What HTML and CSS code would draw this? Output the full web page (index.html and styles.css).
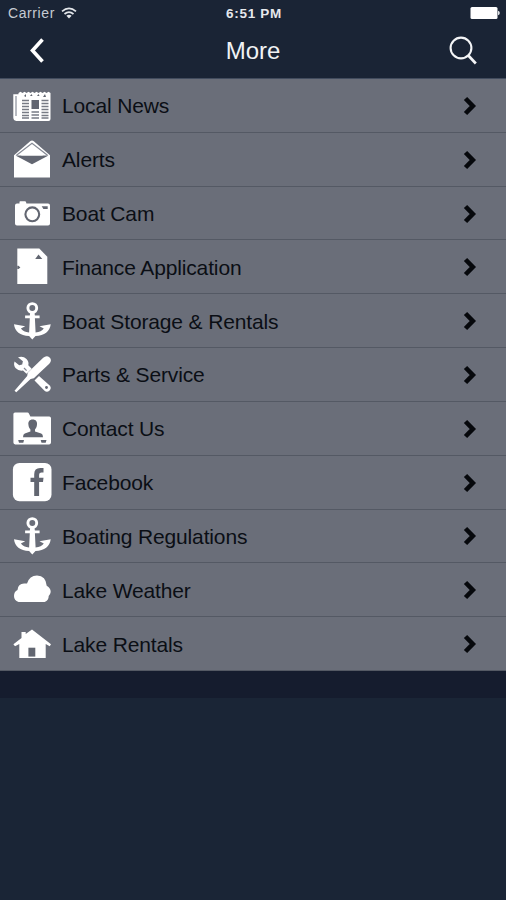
FILE: index.html
```html
<!DOCTYPE html>
<html lang="en">
<head>
<meta charset="utf-8">
<title>More</title>
<link rel="stylesheet" href="styles.css">
</head>
<body>
<svg class="defs" aria-hidden="true">
  <symbol id="chevron" viewBox="0 0 14 20"><path d="M2.500 2.500 9.800 10 2.500 17.500" fill="none" stroke="#06080c" stroke-width="4.600"/></symbol>
  <symbol id="anchor" viewBox="0 0 40 40">
    <circle cx="20.3" cy="7" r="4.400" fill="none" stroke="#fff" stroke-width="2.900"/>
    <path d="M18.300 11h4l.6 3.400h4.700v2.900h-4.700l.7 14.100c4-.5 6.600-1.800 8.200-4l-4.300-2.200L38.700 23.300c-.8 7.300-6.200 11.300-15.200 11.800L20.300 38.400l-3.200-3.300C8.100 34.600 2.700 30.600 2 23.300l11.200 1.900-4.300 2.200c1.600 2.200 4.200 3.500 8.200 4l.7-14.100h-4.700v-2.900h4.700z"/>
  </symbol>
</svg>
<header class="header">
  <div class="status">
    <div class="carrier"><span>Carrier</span>
      <svg class="wifi" viewBox="0 0 16 12"><path d="M1 4.300Q8-1.700 15 4.300M3.500 7Q8 3.200 12.500 7" fill="none" stroke="#e3e6ea" stroke-width="1.7"/><path d="M5.400 8.700Q8 6.800 10.600 8.700L8 11.500z" fill="#e3e6ea"/></svg>
    </div>
    <div class="time">6:51 PM</div>
    <div class="power"><svg class="battery" viewBox="0 0 32 14"><rect x="2.500" y="1" width="27" height="12" rx="1.500" fill="#fff"/><path d="M30 4.800q1.800.5 1.800 2.200T30 9.200z" fill="#dfe2e6"/></svg></div>
  </div>
  <nav class="navbar">
    <svg class="back" viewBox="0 0 18 28"><path d="M14.500 2.500 4.500 13.500 14.500 24.500" fill="none" stroke="#fff" stroke-width="3.600"/></svg>
    <h1 class="title">More</h1>
    <svg class="search" viewBox="0 0 30 30"><circle cx="13" cy="12" r="10.400" fill="none" stroke="#f4f5f7" stroke-width="2.100"/><path d="m20.300 19.500 7.500 8" fill="none" stroke="#f4f5f7" stroke-width="2.700"/></svg>
  </nav>
</header>
<ul class="list">
  <li class="row"><svg class="icon" viewBox="0 0 40 40">
    <path d="M6.500 8 8.500 6.700l2 1.300 2-1.300 2 1.300 2-1.300 2 1.300 2-1.300 2 1.300 2-1.300 2 1.300 2-1.300 2 1.300 2-1.300 2 1.300 2-1.300 2 1.300V34q0 2-2 2H4.300q-3-.5-3-3.500V9.200H6.500z"/>
    <path class="dim" d="M3 11h2v20H3z"/>
    <path class="cut" d="M19.500 15h7.500v9h-7.500zM12 11l2-2v3zM18 11l1.500-2 1 2zM25 11l1.500-2 1 2zM31 12l2-3 1 3z"/>
    <path class="lines" d="M10 15.500h7M10 18.500h7M10 21.500h7M10 24.500h7M10 27.500h7M10 30.500h7M10 33h7M19.500 27h7.500M19.500 30h7.500M19.500 33h7.500M29.500 15.500h7M29.500 18.500h7M29.500 21.500h7M29.500 24.500h7M29.500 27.500h7M29.500 30.500h7M29.500 33h7"/>
  </svg><span class="label">Local News</span><svg class="chevron"><use href="#chevron"/></svg></li>
  <li class="row"><svg class="icon" viewBox="0 0 40 40">
    <path d="M2 16.200 18.500 2q1.500-1 3 0L38 16.200V38.500H2z"/>
    <path class="thin" d="M4.500 16.200 20 4.300l15.500 11.900"/>
    <path class="cut" d="M3.500 16.500h33L20 25.300z"/>
    <path d="M9 16.500 20 6.300l11 10.200z"/>
  </svg><span class="label">Alerts</span><svg class="chevron"><use href="#chevron"/></svg></li>
  <li class="row"><svg class="icon" viewBox="0 0 40 40">
    <path d="M5 10.600h2.500V9q0-.8.800-.8H13q.8 0 1 .8l.4 1.600H36q2 0 2 2v17.900q0 2-2 2H5q-2 0-2-2V12.600q0-2 2-2z"/>
    <circle class="ring" cx="20.300" cy="21.300" r="6.900"/><path class="cut" d="M29.700 13.300h6v2.600h-4.300z"/>
  </svg><span class="label">Boat Cam</span><svg class="chevron"><use href="#chevron"/></svg></li>
  <li class="row"><svg class="icon" viewBox="0 0 40 40">
    <path d="M5.300 1.400h22l8 8.400v27.300h-30z"/><path class="cut" d="m26.500 7.400 3.800 4.700H23.200zM5.300 18.700h1.200l1.900 1.700-1.900 1.700H5.300z"/>
  </svg><span class="label">Finance Application</span><svg class="chevron"><use href="#chevron"/></svg></li>
  <li class="row"><svg class="icon"><use href="#anchor"/></svg><span class="label">Boat Storage &amp; Rentals</span><svg class="chevron"><use href="#chevron"/></svg></li>
  <li class="row"><svg class="icon" viewBox="0 0 40 40">
    <path d="M6 3.200q5-1.700 8.500 1.700 2.700 2.800 1.800 6.300l3.400 3.500-5.200 5-3.500-3.200q-4.500.7-7.200-2.300Q1.300 11.800 2.500 7.500l4.700 3.800 3-.8.700-3.300z"/>
    <path d="m22.500 26.500 4.500-4.600 10.700 9.700q2.200 2.600-.2 5-2.600 2.400-5.200 0z"/>
    <path d="M31.200 3.700q3.500-3 6.400-.2 2.800 2.700-.3 6.200L21.800 24.300l-3.200.7L4.300 38.300 2.500 36.700 15.200 22l.5-3.300z"/>
    <circle class="cut" cx="34.500" cy="33.500" r="1.400"/>
    <path class="thin" d="m12 14 2.600 2.700"/>
  </svg><span class="label">Parts &amp; Service</span><svg class="chevron"><use href="#chevron"/></svg></li>
  <li class="row"><svg class="icon" viewBox="0 0 40 40">
    <path d="M1.400 6q0-1.600 1.600-1.600h12.500q1 0 1.400 1l1.500 3H37.200q1.800 0 1.800 1.800v24.400q0 1.800-1.800 1.800H3.200q-1.800 0-1.800-1.800z"/>
    <path class="cut" d="M20.700 11.500c3.300 0 4.600 2.200 4.300 5-.2 2.400-1 4-2 4.900v2l6.200 2.200q1.800.8 1.800 3.600H11q0-2.800 1.800-3.600l5.600-2.200v-2c-1-.9-1.800-2.500-2-4.900-.3-2.800 1-5 4.300-5zM6.200 32H12l-.7 2.800H7zM28.700 32h5.800l-.8 2.800h-4.200z"/>
  </svg><span class="label">Contact Us</span><svg class="chevron"><use href="#chevron"/></svg></li>
  <li class="row"><svg class="icon" viewBox="0 0 40 40">
    <rect x=".9" y=".9" width="38.600" height="38.300" rx="6.500"/>
    <path class="cut" d="M22.200 33.900V20h-3.700v-4.300h3.700v-3.500q0-6.300 6-6.300h3.300v4.600h-2q-2.400 0-2.400 2.300v2.900h4.400L31 20h-3.900v13.900z"/>
  </svg><span class="label">Facebook</span><svg class="chevron"><use href="#chevron"/></svg></li>
  <li class="row"><svg class="icon"><use href="#anchor"/></svg><span class="label">Boating Regulations</span><svg class="chevron"><use href="#chevron"/></svg></li>
  <li class="row"><svg class="icon" viewBox="0 0 40 40">
    <path d="M6.500 31.900Q2 30.500 2 26q0-4.500 3.500-6Q6 13 13 13.500h2Q17.500 5.500 25 5.500q9 .5 9.700 10.300 4 2.200 4 6.200-.4 2.500-2 4 0 4.500-4 5.900z"/>
  </svg><span class="label">Lake Weather</span><svg class="chevron"><use href="#chevron"/></svg></li>
  <li class="row"><svg class="icon" viewBox="0 0 40 40">
    <path d="M9.500 8h4.200v2.100L20 5.500 39 20.300l-1.300 2-4-2.200V34H7.300V20.100l-4.300 2.200-1.600-2L9.500 14z"/>
    <path class="cut" d="M16.400 23.700h6.900v8.900h-6.900z"/>
  </svg><span class="label">Lake Rentals</span><svg class="chevron"><use href="#chevron"/></svg></li>
</ul>
<div class="band"></div>
</body>
</html>
```
FILE: styles.css
```css
* { box-sizing: border-box; }
body {
  margin: 0;
  height: 900px;
  overflow: hidden;
  background: #1a2536;
  font-family: "Liberation Sans", Arial, sans-serif;
}
.defs { display: none; }
.header {
  height: 79px;
  background: #1a2435;
  border-bottom: 1px solid #424c5e;
}
.status {
  display: grid;
  grid-template-columns: 1fr auto 1fr;
  align-items: center;
  height: 26px;
  padding: 0 6px 0 8px;
}
.carrier { display: flex; align-items: center; gap: 6px; color: #c6cbd2; font-size: 14px; letter-spacing: .6px; }
.wifi { width: 16px; height: 12px; }
.time { color: #e6e8ec; font-size: 13.500px; font-weight: bold; letter-spacing: .7px; }
.power { display: flex; justify-content: flex-end; }
.battery { width: 32px; height: 14px; }
.navbar {
  display: grid;
  grid-template-columns: 1fr auto 1fr;
  align-items: center;
  height: 50px;
  padding: 0 28px;
}
.back { width: 18px; height: 28px; }
.title { margin: 0; color: #f0f2f4; font-size: 24px; font-weight: normal; line-height: 28px; }
.search { width: 30px; height: 30px; justify-self: end; }
.list { margin: 0; padding: 0; list-style: none; }
.row {
  display: flex;
  align-items: center;
  height: 53.820px;
  padding: 0 29px 0 12px;
  background: #6a6e79;
  border-bottom: 1.500px solid #545964;
}
.icon { width: 40px; height: 40px; flex: none; fill: #fff; }
.label { flex: 1; margin-left: 10px; padding-top: 2px; color: #0b0e15; font-size: 21px; letter-spacing: -.14px; white-space: nowrap; }
.chevron { width: 14px; height: 20px; margin-top: 1px; }
.cut { fill: #626671; }
.dim { fill: #b7bac1; }
.lines { fill: none; stroke: #777b85; stroke-width: 1.400; }
.thin { fill: none; stroke: #858994; stroke-width: 1.200; }
.ring { fill: none; stroke: #626671; stroke-width: 2.100; }
.band { height: 27px; background: #151c2e; }
```
